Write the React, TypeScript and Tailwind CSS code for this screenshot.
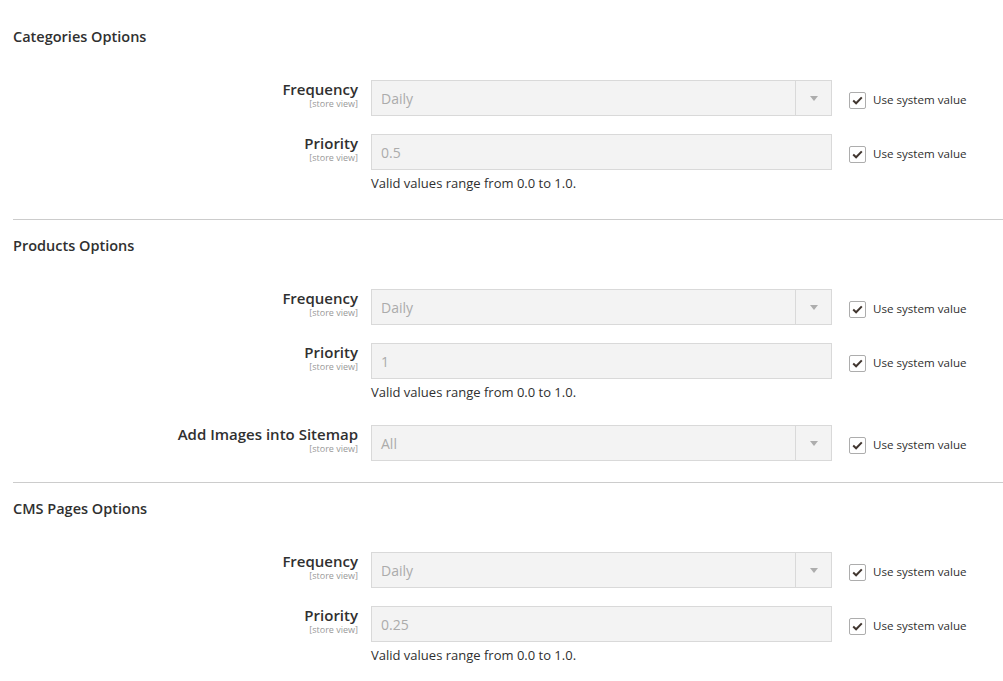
import { Fragment } from "react";

type Field = {
  label: string;
  value: string;
  kind: "select" | "input";
  note?: string;
};

type Section = {
  title: string;
  fields: Field[];
};

const NOTE = "Valid values range from 0.0 to 1.0.";

const sections: Section[] = [
  {
    title: "Categories Options",
    fields: [
      { label: "Frequency", value: "Daily", kind: "select" },
      { label: "Priority", value: "0.5", kind: "input", note: NOTE },
    ],
  },
  {
    title: "Products Options",
    fields: [
      { label: "Frequency", value: "Daily", kind: "select" },
      { label: "Priority", value: "1", kind: "input", note: NOTE },
      { label: "Add Images into Sitemap", value: "All", kind: "select" },
    ],
  },
  {
    title: "CMS Pages Options",
    fields: [
      { label: "Frequency", value: "Daily", kind: "select" },
      { label: "Priority", value: "0.25", kind: "input", note: NOTE },
    ],
  },
];

function SystemCheckbox() {
  return (
    <label className="flex items-start gap-[7px] pt-[11px] text-[11.6px] leading-[18px] text-[#303030]">
      <span className="mt-[1px] flex h-[17px] w-[17px] items-center justify-center rounded-[2px] border border-[#adadad] bg-white">
        <svg width="11" height="9" viewBox="0 0 11 9">
          <path d="M1.2 4.6 L4.1 7.3 L9.8 1.4" fill="none" stroke="#41362f" strokeWidth="2" />
        </svg>
      </span>
      <span>Use system value</span>
    </label>
  );
}

function FieldRow({ field }: { field: Field }) {
  return (
    <div className="mb-[18px] grid grid-cols-[345px_461px_auto] gap-x-[13px]">
      <div className="flex flex-col items-end text-right">
        <span className="mt-[-2px] text-[15px] font-semibold leading-[22px] text-[#303030]">
          {field.label}
        </span>
        <span className="mt-[-2px] text-[9px] leading-[12px] text-[#999999]">[store view]</span>
      </div>
      <div>
        <div className="flex h-[36px] items-stretch border border-[#d9d9d9] bg-[#f3f3f3]">
          <div className="flex flex-1 items-center px-[9px] text-[14px] text-[#ababab]">
            {field.value}
          </div>
          {field.kind === "select" && (
            <div className="flex w-[36px] items-center justify-center border-l border-[#d9d9d9]">
              <span className="h-0 w-0 border-x-[4.5px] border-t-[5px] border-x-transparent border-t-[#adadad]" />
            </div>
          )}
        </div>
        {field.note && (
          <div className="h-[28px] pt-[4px] text-[13px] leading-[18px] text-[#303030]">
            {field.note}
          </div>
        )}
      </div>
      <div className="pl-[4px]">
        <SystemCheckbox />
      </div>
    </div>
  );
}

export default function App() {
  return (
    <div
      className="min-h-screen bg-white pl-[13px] pt-[28px]"
      style={{ fontFamily: '"Open Sans", "Liberation Sans", sans-serif' }}
    >
      {sections.map((section, i) => (
        <Fragment key={section.title}>
          {i > 0 && <div className="h-px bg-[#cccccc]" />}
          <section className={i > 0 ? "pb-[3px] pt-[17px]" : "pb-[3px]"}>
            <h2 className="mb-[34px] text-[14.5px] font-semibold leading-[18px] text-[#303030]">
              {section.title}
            </h2>
            <div>
              {section.fields.map((field) => (
                <FieldRow key={field.label} field={field} />
              ))}
            </div>
          </section>
        </Fragment>
      ))}
    </div>
  );
}
